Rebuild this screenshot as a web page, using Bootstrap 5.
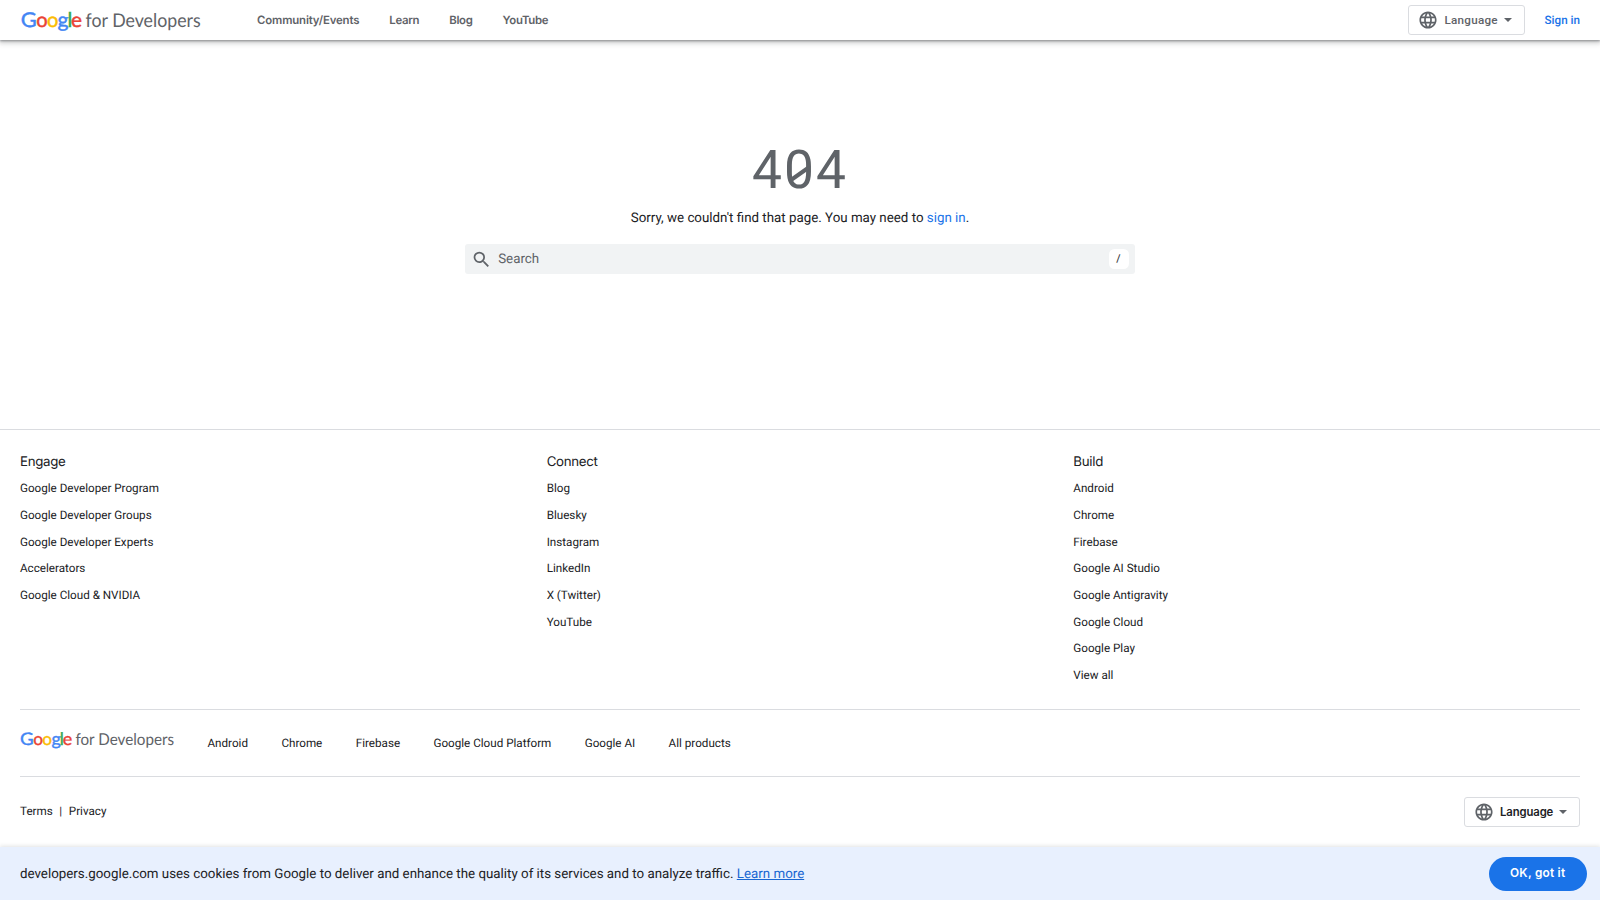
<!DOCTYPE html>
<html lang="en">
<head>
<meta charset="utf-8">
<title>404 - Google for Developers</title>
<meta name="viewport" content="width=device-width, initial-scale=1">
<link href="https://cdn.jsdelivr.net/npm/bootstrap@5.3.0/dist/css/bootstrap.min.css" rel="stylesheet">
<style>
:root{--ink:#202124;--grey:#5f6368;--blue:#1a73e8;--line:#dadce0;--brand:Inter,Lato,sans-serif}
html,body{height:900px;overflow:hidden}
body{font-family:Roboto,sans-serif;font-size:11.667px;line-height:26.667px;color:var(--ink);background:#fff;text-rendering:geometricPrecision}
a{text-decoration:none;color:inherit}
.topbar{height:40px;padding:0 20px 0 21px;box-shadow:0 1px 2px rgba(60,64,67,.45),0 2px 5px 1px rgba(60,64,67,.28);z-index:2}
.site-nav{margin-left:56px;gap:30px;font:600 11.4px/20px var(--brand);letter-spacing:-.15px;color:var(--grey);padding-bottom:1px}
.site-nav a:nth-child(n+2){letter-spacing:-.3px}
.lang-btn{width:116.5px;height:30px;border:1px solid var(--line);border-radius:3px;padding:0 12px 0 10px;font-weight:500;font-size:11.667px;line-height:28px;background:#fff;letter-spacing:.25px}
.lang-btn.brand-face{font-family:var(--brand);font-size:11.3px;font-weight:600;letter-spacing:-.1px;color:var(--ink)}
.lang-btn .globe{width:18px;height:18px;margin-right:7.5px}
.caret{border:4px solid transparent;border-top-color:var(--grey);border-bottom:0}
.main-area{height:389px;padding-top:104.5px}
.code404{font-size:53.33px;line-height:53.33px;letter-spacing:2.1px;color:var(--grey);margin:0;font-weight:400}
.zero{position:relative}
.zero svg{position:absolute;left:0;top:0;width:30px;height:62px}
.sorry{font-size:13.333px;line-height:20px;margin:11.5px 0 15px}
.search-box{width:670px;height:30px;background:#f1f3f4;border-radius:3px;font-size:13.333px;color:var(--grey);padding:0 6.5px 0 6px}
.slash{width:20px;height:20px;border-radius:5.5px;background:#fff;color:#3c4043;font-size:11px;font-weight:500;line-height:19px}
.foot{border-top:1px solid var(--line);padding:19px 20px 0}
.foot-cols{display:grid;grid-template-columns:repeat(3,1fr);gap:20px;height:260px}
.foot-cols h2{font:400 13.3px/26.3px var(--brand);margin:0;letter-spacing:-.3px}
.foot-links{height:68px;border-top:1px solid var(--line);border-bottom:1px solid var(--line)}
.prod-nav{gap:33.4px;margin-left:33px}
.cookie{height:54px;background:#e8f0fe;font-size:13.333px;padding:0 13.3px 0 20px;box-shadow:0 -1px 4px rgba(60,64,67,.15)}
.ok-btn{width:98px;height:33.3px;border:0;border-radius:17px;background:var(--blue);color:#fff;font:600 11.8px/32px var(--brand);letter-spacing:.25px;padding:0 0 1px}
</style>
</head>
<body>
<svg width="0" height="0" class="d-none">
  <symbol id="globe" viewBox="0 0 24 24"><path fill="#5f6368" d="M11.99 2C6.47 2 2 6.48 2 12s4.47 10 9.99 10C17.52 22 22 17.52 22 12S17.52 2 11.99 2zm6.93 6h-2.95a15.65 15.65 0 0 0-1.38-3.56A8.03 8.03 0 0 1 18.92 8zM12 4.04c.83 1.2 1.48 2.53 1.91 3.96h-3.82c.43-1.43 1.08-2.76 1.91-3.96zM4.26 14C4.1 13.36 4 12.69 4 12s.1-1.36.26-2h3.38c-.08.66-.14 1.32-.14 2s.06 1.34.14 2H4.26zm.82 2h2.95c.32 1.25.78 2.45 1.38 3.56A7.987 7.987 0 0 1 5.08 16zm2.95-8H5.08a7.987 7.987 0 0 1 4.33-3.56A15.65 15.65 0 0 0 8.03 8zM12 19.96c-.83-1.2-1.48-2.53-1.91-3.96h3.82c-.43 1.43-1.08 2.76-1.91 3.96zM14.34 14H9.66c-.09-.66-.16-1.32-.16-2s.07-1.35.16-2h4.68c.09.65.16 1.32.16 2s-.07 1.34-.16 2zm.25 5.56c.6-1.11 1.06-2.31 1.38-3.56h2.95a8.03 8.03 0 0 1-4.33 3.56zM16.36 14c.08-.66.14-1.32.14-2s-.06-1.34-.14-2h3.38c.16.64.26 1.31.26 2s-.1 1.36-.26 2h-3.38z"/></symbol>
  <symbol id="brandmark" viewBox="0 0 180 28">
    <g font-family="Lato, sans-serif" font-size="20.3" stroke-width=".45">
      <text y="20.6" x="-.2" fill="#4285f4" stroke="#4285f4" textLength="16" lengthAdjust="spacingAndGlyphs">G</text>
      <text y="20.6" x="15.2" fill="#ea4335" stroke="#ea4335" textLength="11.4" lengthAdjust="spacingAndGlyphs">o</text>
      <text y="20.6" x="25.9" fill="#fbbc04" stroke="#fbbc04" textLength="11.4" lengthAdjust="spacingAndGlyphs">o</text>
      <text y="20.6" x="36.6" fill="#4285f4" stroke="#4285f4" textLength="11" lengthAdjust="spacingAndGlyphs">g</text>
      <text y="20.6" x="46.4" fill="#34a853" stroke="#34a853">l</text>
      <text y="20.6" x="49.9" fill="#ea4335" stroke="#ea4335" textLength="11" lengthAdjust="spacingAndGlyphs">e</text>
    </g>
    <text y="20.6" x="64.5" font-family="Lato, sans-serif" font-size="19" fill="#5f6368" textLength="115.2" lengthAdjust="spacingAndGlyphs">for Developers</text>
  </symbol>
</svg>
<div class="d-flex flex-column h-100">
  <header class="topbar d-flex align-items-center position-relative bg-white flex-shrink-0">
    <svg width="180" height="28"><use href="#brandmark"/></svg>
    <nav class="site-nav d-flex"><a href="#">Community/Events</a><a href="#">Learn</a><a href="#">Blog</a><a href="#">YouTube</a></nav>
    <button class="lang-btn d-flex align-items-center ms-auto" style="color:#5f6368"><svg class="globe" viewBox="1.5 1.5 21 21"><use href="#globe" width="24" height="24"/></svg>Language<span class="caret ms-auto"></span></button>
    <a href="#" style="color:#1a73e8;font-weight:500;margin-left:20px">Sign in</a>
  </header>
  <main class="main-area d-flex flex-column align-items-center flex-shrink-0">
    <h1 class="code404">4<span class="zero">0<svg viewBox="0 0 30 62"><path d="M7 40 24 28" stroke="#5f6368" stroke-width="4"/></svg></span>4</h1>
    <p class="sorry">Sorry, we couldn't find that page. You may need to <a href="#" style="color:#1a73e8">sign in</a>.</p>
    <div class="search-box d-flex align-items-center">
      <svg width="21" height="21" viewBox="0 0 24 24"><path fill="#5f6368" d="M15.5 14h-.79l-.28-.27A6.471 6.471 0 0 0 16 9.5 6.5 6.5 0 1 0 9.5 16c1.61 0 3.09-.59 4.23-1.57l.27.28v.79l5 4.99L20.49 19l-4.99-5zm-6 0C7.01 14 5 11.99 5 9.5S7.01 5 9.5 5 14 7.01 14 9.5 11.99 14 9.5 14z"/></svg>
      <span style="margin-left:6.2px;padding-top:3px">Search</span><span class="slash text-center ms-auto">/</span>
    </div>
  </main>
  <footer class="foot flex-grow-1">
    <div class="foot-cols">
      <section><h2>Engage</h2><ul class="list-unstyled mb-0"><li>Google Developer Program</li><li>Google Developer Groups</li><li>Google Developer Experts</li><li>Accelerators</li><li>Google Cloud &amp; NVIDIA</li></ul></section>
      <section><h2>Connect</h2><ul class="list-unstyled mb-0"><li>Blog</li><li>Bluesky</li><li>Instagram</li><li>LinkedIn</li><li>X (Twitter)</li><li>YouTube</li></ul></section>
      <section><h2>Build</h2><ul class="list-unstyled mb-0"><li>Android</li><li>Chrome</li><li>Firebase</li><li>Google AI Studio</li><li>Google Antigravity</li><li>Google Cloud</li><li>Google Play</li><li>View all</li></ul></section>
    </div>
    <div class="foot-links d-flex align-items-center">
      <svg width="154.5" height="24" viewBox="0 0 180 28" style="margin-bottom:8px"><use href="#brandmark" width="180" height="28"/></svg>
      <nav class="prod-nav d-flex"><a href="#">Android</a><a href="#">Chrome</a><a href="#">Firebase</a><a href="#">Google Cloud Platform</a><a href="#">Google AI</a><a href="#">All products</a></nav>
    </div>
    <div class="d-flex align-items-center justify-content-between" style="height:70px">
      <div class="d-flex" style="padding-bottom:2px"><a href="#">Terms</a><span style="margin:0 6.6px">|</span><a href="#">Privacy</a></div>
      <button class="lang-btn brand-face d-flex align-items-center"><svg class="globe" viewBox="1.5 1.5 21 21"><use href="#globe" width="24" height="24"/></svg>Language<span class="caret ms-auto"></span></button>
    </div>
  </footer>
  <div class="cookie d-flex align-items-center justify-content-between flex-shrink-0">
    <span style="padding-top:2px">developers.google.com uses cookies from Google to deliver and enhance the quality of its services and to analyze traffic. <a href="#" class="text-decoration-underline" style="color:#1967d2">Learn more</a></span>
    <button class="ok-btn">OK, got it</button>
  </div>
</div>
<script src="https://cdn.jsdelivr.net/npm/bootstrap@5.3.0/dist/js/bootstrap.bundle.min.js"></script>
</body>
</html>
